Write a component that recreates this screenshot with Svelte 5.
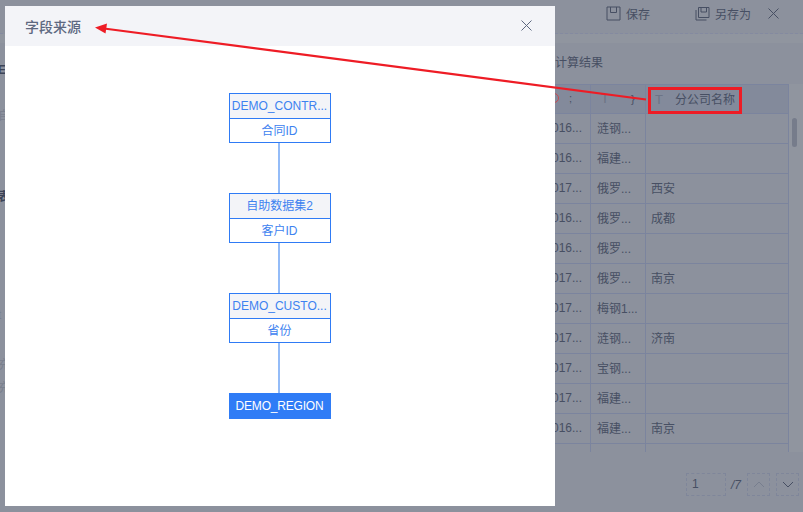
<script lang="ts">
  const rows = [
    ['2016...', '涟钢...', ''],
    ['2016...', '福建...', ''],
    ['2017...', '俄罗...', '西安'],
    ['2016...', '俄罗...', '成都'],
    ['2016...', '俄罗...', ''],
    ['2017...', '俄罗...', '南京'],
    ['2017...', '梅钢1...', ''],
    ['2017...', '涟钢...', '济南'],
    ['2017...', '宝钢...', ''],
    ['2017...', '福建...', ''],
    ['2016...', '福建...', '南京'],
    ['2016...', '宝钢...', '']
  ];

  const lineage = [
    { head: 'DEMO_CONTR...', field: '合同ID' },
    { head: '自助数据集2', field: '客户ID' },
    { head: 'DEMO_CUSTO...', field: '省份' }
  ];
</script>

<div class="page">
  <header class="topbar">
    <button class="action">
      <svg width="15" height="15" viewBox="0 0 15 15"><path d="M1 1h13v13h-13zM4.500 1v5.500h6v-5.500" /></svg>
      保存
    </button>
    <button class="action">
      <svg width="16" height="16" viewBox="0 0 16 16"><path d="M4.500 1.500h10.500v10h-10.500zM7 1.500v4.500h5.500v-4.500M2 4v10h10.500" /></svg>
      另存为
    </button>
    <svg class="exit" width="11" height="11" viewBox="0 0 11 11"><path d="M.5.5l10 10M10.500.5l-10 10" /></svg>
  </header>
  <div class="band"></div>

  <div class="content">
    <aside class="side">
      <span class="dark e">E</span>
      <span class="faint f1">自</span>
      <span class="dark b">表</span>
      <span class="faint f2">t</span>
      <span class="faint f3">充</span>
      <span class="faint f4">充</span>
    </aside>

    <main class="result">
      <h3>计算结果</h3>
      <div class="table-wrap">
        <table>
          <thead>
            <tr>
              <th class="c1"><i class="ring"></i><span class="sort">;</span></th>
              <th class="c2"><span class="t">T</span><span class="sort">&#125;</span></th>
              <th class="c3"><span class="t">T</span>分公司名称</th>
            </tr>
          </thead>
          <tbody>
            {#each rows as row}
              <tr>
                <td class="c1">{row[0]}</td>
                <td class="c2">{row[1]}</td>
                <td class="c3">{row[2]}</td>
              </tr>
            {/each}
          </tbody>
        </table>
        <div class="scroll"><span></span></div>
      </div>
      <div class="pager">
        <span class="num">1</span>
        <span class="total">/7</span>
        <span class="pg up"><svg width="12" height="7" viewBox="0 0 12 7"><path d="M1 6l5-5 5 5" /></svg></span>
        <span class="pg down"><svg width="12" height="7" viewBox="0 0 12 7"><path d="M1 1l5 5 5-5" /></svg></span>
      </div>
    </main>
  </div>

  <section class="modal">
    <div class="modal-head">
      <span>字段来源</span>
      <svg width="11" height="11" viewBox="0 0 11 11"><path d="M.5.5l10 10M10.500.5l-10 10" /></svg>
    </div>
    <div class="chain">
      {#each lineage as n}
        <div class="node">
          <div class="node-head">{n.head}</div>
          <div class="node-field">{n.field}</div>
        </div>
        <div class="link"></div>
      {/each}
      <div class="node-end">DEMO_REGION</div>
    </div>
  </section>

  <!-- annotation drawn on top of the screenshot -->
  <div class="mark"></div>
  <svg class="arrow" width="803" height="512" viewBox="0 0 803 512">
    <line x1="646" y1="99.500" x2="104" y2="28.500" />
    <polygon points="95,27.500 107,23.500 105.500,33.500" />
  </svg>
</div>

<style>
  :global(body) {
    margin: 0;
  }

  .page {
    position: relative;
    width: 803px;
    height: 512px;
    overflow: hidden;
    display: flex;
    flex-direction: column;
    background: #8c919d;
    font-family: "Liberation Sans", "Noto Sans CJK SC", sans-serif;
    font-size: 12px;
    color: #474f63;
  }

  .topbar {
    height: 34px;
    flex: none;
    display: flex;
    justify-content: flex-end;
    align-items: center;
    gap: 44px;
    padding: 0 24px 6px 0;
    box-sizing: border-box;
    border-bottom: 1px dashed #848aa0;
  }

  .band {
    height: 9px;
    flex: none;
    background: #90959f;
  }

  .action {
    display: flex;
    align-items: center;
    gap: 5px;
    padding: 0;
    border: 0;
    background: none;
    color: inherit;
    font: inherit;
  }

  svg path {
    fill: none;
    stroke: currentColor;
    stroke-width: 1;
  }

  .exit {
    margin-left: -27px;
  }

  .content {
    flex: 1;
    display: flex;
    min-height: 0;
  }

  .side {
    width: 555px;
    flex: none;
    position: relative;
  }

  .side span {
    position: absolute;
    left: -2px;
    font-size: 12px;
  }

  .dark {
    color: #3c4458;
    font-weight: 700;
  }

  .faint {
    color: #7a808e;
  }

  .e { top: 20px; }
  .f1 { top: 63px; }
  .b { top: 144px; }
  .f2 { top: 265px; }
  .f3 { top: 312px; }
  .f4 { top: 335px; }

  .result {
    flex: 1;
    min-width: 0;
    display: flex;
    flex-direction: column;
  }

  h3 {
    margin: 0;
    height: 41px;
    padding-top: 12px;
    box-sizing: border-box;
    font-size: 12px;
    font-weight: 400;
    line-height: 17px;
  }

  .table-wrap {
    height: 368px;
    display: flex;
    overflow: hidden;
    margin-left: -11px;
  }

  table {
    width: 245px;
    flex: none;
    table-layout: fixed;
    border-collapse: collapse;
    align-self: flex-start;
  }

  th,
  td {
    height: 30px;
    padding: 0 6px 2px;
    box-sizing: border-box;
    border: 1px solid #7b849e;
    text-align: left;
    font-weight: 400;
    white-space: nowrap;
    overflow: hidden;
  }

  th {
    height: 29px;
    background: #838a9b;
  }

  .c1 { width: 46px; padding-left: 0; }
  .c2 { width: 55px; }
  .c3 { padding-left: 5px; }

  td.c1 {
    text-align: right;
    padding-right: 8px;
  }

  .ring {
    display: inline-block;
    width: 8px;
    height: 8px;
    margin-left: 4px;
    border: 1px solid #c9494f;
    border-radius: 50%;
    vertical-align: -1px;
  }

  .sort {
    margin-left: 10px;
    font-size: 11px;
  }

  .t {
    display: inline-block;
    width: 10px;
    margin: 0 10px 0 4px;
    color: #6d7486;
    font-size: 13px;
  }

  .scroll {
    flex: 1;
    position: relative;
    background: #90959f;
  }

  .scroll span {
    position: absolute;
    left: 3px;
    top: 34px;
    width: 5px;
    height: 29px;
    border-radius: 3px;
    background: #767c8b;
  }

  .pager {
    display: flex;
    align-items: center;
    margin: 21px 0 0 131px;
  }

  .num {
    width: 40px;
    height: 23px;
    box-sizing: border-box;
    padding-left: 5px;
    border: 1px dashed #7f869a;
    line-height: 21px;
  }

  .total {
    width: 21px;
    padding-left: 5px;
    box-sizing: border-box;
    font-style: italic;
  }

  .pg {
    width: 23px;
    height: 23px;
    box-sizing: border-box;
    display: flex;
    align-items: center;
    justify-content: center;
    border: 1px dashed #7f869a;
  }

  .up {
    color: #777e8e;
    margin-right: 6px;
  }

  .modal {
    position: absolute;
    left: 5px;
    top: 6px;
    width: 550px;
    height: 500px;
    background: #fff;
  }

  .modal-head {
    height: 40px;
    padding: 0 23px 1px 20px;
    box-sizing: border-box;
    display: flex;
    align-items: center;
    justify-content: space-between;
    background: #f3f4f8;
    color: #5d6880;
    font-size: 14px;
    font-weight: 500;
  }

  .chain {
    display: flex;
    flex-direction: column;
    align-items: center;
    padding-top: 47px;
    margin-left: -1px;
  }

  .node {
    width: 102px;
    height: 50px;
    box-sizing: border-box;
    border: 1px solid #2f7bf5;
    color: #3d82f0;
    text-align: center;
    line-height: 24px;
  }

  .node-head {
    height: 25px;
    background: #f3f4f8;
    border-bottom: 1px solid #2f7bf5;
    box-sizing: border-box;
  }

  .link {
    width: 2px;
    height: 50px;
    margin-right: 2px;
    background: #94bcf8;
  }

  .node-end {
    width: 102px;
    height: 26px;
    background: #2f7cf6;
    color: #fff;
    text-align: center;
    line-height: 26px;
    letter-spacing: -0.2px;
  }

  .mark {
    position: absolute;
    left: 648px;
    top: 87px;
    width: 94px;
    height: 27px;
    box-sizing: border-box;
    border: 3px solid #ee1c25;
  }

  .arrow {
    position: absolute;
    left: 0;
    top: 0;
  }

  .arrow line {
    stroke: #ee1c25;
    stroke-width: 2.200;
  }

  .arrow polygon {
    fill: #ee1c25;
  }
</style>
